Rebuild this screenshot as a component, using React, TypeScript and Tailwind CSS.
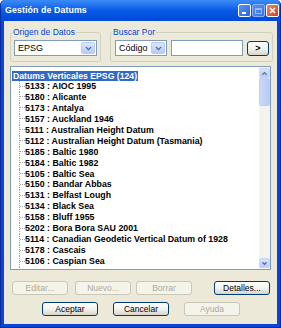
import { ChevronDown, ChevronUp } from 'lucide-react'

const items = [
  '5133 : AIOC 1995',
  '5180 : Alicante',
  '5173 : Antalya',
  '5157 : Auckland 1946',
  '5111 : Australian Height Datum',
  '5112 : Australian Height Datum (Tasmania)',
  '5185 : Baltic 1980',
  '5184 : Baltic 1982',
  '5105 : Baltic Sea',
  '5150 : Bandar Abbas',
  '5131 : Belfast Lough',
  '5134 : Black Sea',
  '5158 : Bluff 1955',
  '5202 : Bora Bora SAU 2001',
  '5114 : Canadian Geodetic Vertical Datum of 1928',
  '5178 : Cascais',
  '5106 : Caspian Sea',
  '5179 : Constanta',
]

function DropArrow() {
  return (
    <div className="w-[14px] my-[1px] mr-[1px] rounded-[2px] border border-[#B9CBF3] bg-gradient-to-b from-[#DCE6FC] to-[#B7CBF8] flex items-center justify-center">
      <ChevronDown className="w-[9px] h-[9px] text-[#4D6185]" strokeWidth={3.5} />
    </div>
  )
}

function Combo({ value, width }: { value: string; width: string }) {
  return (
    <div className={`${width} h-[16px] bg-white border border-[#7F9DB9] flex`}>
      <div className="flex-1 pl-[3px] text-[9px] leading-[14px] text-black">{value}</div>
      <DropArrow />
    </div>
  )
}

function GroupBox({ label, width, children }: { label: string; width: string; children: React.ReactNode }) {
  return (
    <div className={`${width} flex flex-col`}>
      <div className="h-[10px] pl-[2px] flex">
        <span className="relative z-10 bg-[#ECE9D8] px-[1px] text-[8.5px] leading-[10px] text-[#0046D5]">{label}</span>
      </div>
      <div className="-mt-[5px] border border-[#D0D0BF] rounded-[3px] pt-[7px] pb-[5px] flex">{children}</div>
    </div>
  )
}

function XpButton({ label, disabled = false, className = '' }: { label: string; disabled?: boolean; className?: string }) {
  return (
    <div
      className={`w-[56px] h-[14px] rounded-[3px] border flex items-center justify-center text-[8.5px] leading-none ${
        disabled
          ? 'border-[#C9C7BA] bg-[#F5F4EA] text-[#ACA899]'
          : 'border-[#003C74] bg-gradient-to-b from-[#FFFFFF] via-[#F3F3EE] to-[#D8D4CA] text-black'
      } ${className}`}
    >
      {label}
    </div>
  )
}

export default function App() {
  return (
    <div className="w-[281px] h-[328px] bg-[#0A45D8] border-x border-b border-[#0B2C9C] rounded-t-[5px] flex flex-col overflow-hidden [font-family:'Liberation_Sans',Arial,sans-serif]">
      {/* title bar */}
      <div className="h-[21px] shrink-0 bg-gradient-to-b from-[#3B8CF6] via-[#0A5AE8] to-[#0049D8] flex items-center pl-[4px] pr-[1px]">
        <span className="flex-1 text-white font-bold text-[8.8px] tracking-[0.1px]">Gestión de Datums</span>
        <div className="flex gap-[1px]">
          <div className="w-[13px] h-[13px] rounded-[2px] border border-white bg-gradient-to-br from-[#5E95F5] to-[#2663E0] flex items-end pl-[3px] pb-[2px]">
            <div className="w-[4px] h-[2px] bg-white" />
          </div>
          <div className="w-[13px] h-[13px] rounded-[2px] border border-[#8FB0F0] bg-gradient-to-br from-[#5B8FF0] to-[#3A72E4] flex items-center justify-center">
            <div className="w-[7px] h-[6px] border border-[#9CB8EF] border-t-2" />
          </div>
          <div className="w-[13px] h-[13px] rounded-[2px] border border-white bg-gradient-to-br from-[#E98A6A] to-[#C8401D] flex items-center justify-center">
            <svg width="7" height="7" viewBox="0 0 7 7">
              <path d="M1 1 L6 6 M6 1 L1 6" stroke="white" strokeWidth="1.6" />
            </svg>
          </div>
        </div>
      </div>

      {/* client area */}
      <div className="flex-1 ml-[3px] mr-[3px] mb-[3px] bg-[#ECE9D8] flex flex-col">
        <div className="flex pl-[6px] pt-[6px] gap-[9px]">
          <GroupBox label="Origen de Datos" width="w-[91px]">
            <div className="pl-[3px]">
              <Combo value="EPSG" width="w-[83px]" />
            </div>
          </GroupBox>
          <GroupBox label="Buscar Por" width="w-[163px]">
            <div className="pl-[4px] flex gap-[4px] items-center">
              <Combo value="Código" width="w-[52px]" />
              <div className="w-[72px] h-[16px] bg-white border border-[#7F9DB9]" />
              <div className="w-[22px] h-[15px] rounded-[3px] border border-[#003C74] bg-gradient-to-b from-white via-[#F3F3EE] to-[#D8D4CA] flex items-center justify-center text-[9px] font-bold leading-none">
                &gt;
              </div>
            </div>
          </GroupBox>
        </div>

        {/* tree list */}
        <div className="mt-[4px] mx-[6px] h-[204px] bg-white border border-[#7F9DB9] flex overflow-hidden">
          <div className="flex-1 pt-[4px] overflow-hidden">
            <div className="flex">
              <div className="ml-[1px] h-[10px] bg-[#316AC5] px-[1px] text-white font-bold text-[8.7px] leading-[10px] whitespace-nowrap">
                Datums Verticales EPSG (124)
              </div>
            </div>
            {items.map((item) => (
              <div key={item} className="flex h-[10.95px]">
                <div className="w-[8px] shrink-0" />
                <div className="w-[6px] shrink-0 border-l border-dotted border-[#A0A0A0]">
                  <div className="h-[5.5px] border-b border-dotted border-[#A0A0A0]" />
                </div>
                <div className="text-[8.8px] font-bold leading-[10.95px] text-black whitespace-nowrap">{item}</div>
              </div>
            ))}
          </div>

          {/* scrollbar */}
          <div className="w-[11px] shrink-0 bg-[#F4F3EE] flex flex-col pt-[1px] pb-[1px]">
            <div className="h-[10px] rounded-[2px] border border-[#C9D6F7] bg-gradient-to-b from-[#D6E2FD] to-[#B9CCF8] flex items-center justify-center">
              <ChevronUp className="w-[7px] h-[7px] text-[#4D6185]" strokeWidth={4} />
            </div>
            <div className="h-[28px] rounded-[2px] border border-[#BFD0F6] bg-gradient-to-r from-[#C9D8FC] to-[#B8CCF8]" />
            <div className="flex-1" />
            <div className="h-[10px] rounded-[2px] border border-[#C9D6F7] bg-gradient-to-b from-[#D6E2FD] to-[#B9CCF8] flex items-center justify-center">
              <ChevronDown className="w-[7px] h-[7px] text-[#4D6185]" strokeWidth={4} />
            </div>
          </div>
        </div>

        {/* buttons */}
        <div className="flex mt-[11px] pl-[8px]">
          <XpButton label="Editar..." disabled />
          <XpButton label="Nuevo..." disabled className="ml-[7px]" />
          <XpButton label="Borrar" disabled className="ml-[5px]" />
          <XpButton label="Detalles..." className="ml-[22px]" />
        </div>
        <div className="flex mt-[7px] pl-[38px]">
          <XpButton label="Aceptar" />
          <XpButton label="Cancelar" className="ml-[15px]" />
          <XpButton label="Ayuda" disabled className="ml-[15px]" />
        </div>
      </div>
    </div>
  )
}
